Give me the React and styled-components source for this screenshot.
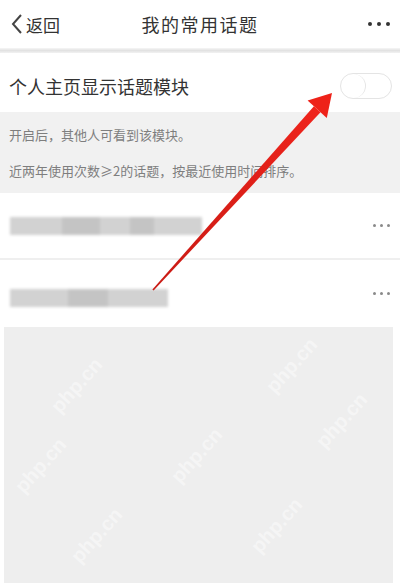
import React from "react";
import styled, { createGlobalStyle } from "styled-components";

const GlobalStyle = createGlobalStyle`
  html, body {
    margin: 0;
    padding: 0;
    background: #fff;
  }
  body {
    font-family: "Noto Sans CJK SC", "Noto Sans", sans-serif;
    color: #333;
  }
`;

const topics = [
  { id: 1, blocks: [52, 38, 30, 24, 48], shift: 0 },
  { id: 2, blocks: [58, 40, 60], shift: 4 },
];

// faint watermark stamps over the empty area
const marks = [
  { x: 40, y: 375 },
  { x: 255, y: 355 },
  { x: 160, y: 445 },
  { x: 240, y: 515 },
  { x: 305, y: 410 },
  { x: 4, y: 455 },
  { x: 60, y: 525 },
];

const Dots = ({ dark }) => (
  <DotRow dark={dark}>
    <span />
    <span />
    <span />
  </DotRow>
);

const Toggle = () => (
  <Switch>
    <Knob />
  </Switch>
);

const App = () => (
  <>
    <GlobalStyle />
    <Page>
      <Header>
        <Back>
          <svg width="14" height="22" viewBox="0 0 14 22">
            <path d="M11 2 L3 11 L11 20" fill="none" stroke="#444" strokeWidth="2" />
          </svg>
          返回
        </Back>
        <Title>我的常用话题</Title>
        <HeaderMore>
          <Dots dark />
        </HeaderMore>
      </Header>
      <Shade />

      <SettingRow>
        <SettingLabel>个人主页显示话题模块</SettingLabel>
        <Toggle />
      </SettingRow>

      <Notes>
        <Note>开启后，其他人可看到该模块。</Note>
        <Note>近两年使用次数≥2的话题，按最近使用时间排序。</Note>
      </Notes>

      {topics.map((t, i) => (
        <TopicRow key={t.id} last={i === topics.length - 1}>
          <Redacted shift={t.shift}>
            {t.blocks.map((w, j) => (
              <Block key={j} style={{ width: w }} tone={j % 2} />
            ))}
          </Redacted>
          <Dots />
        </TopicRow>
      ))}

      <Filler>
        {marks.map((m, i) => (
          <Mark key={i} style={{ left: m.x, top: m.y - 328 }}>
            php.cn
          </Mark>
        ))}
      </Filler>

      <Arrow width="400" height="587" viewBox="0 0 400 587">
        <defs>
          <linearGradient id="shaft" x1="0" y1="1" x2="1" y2="0">
            <stop offset="0" stopColor="#c81a14" />
            <stop offset="1" stopColor="#f0241c" />
          </linearGradient>
        </defs>
        <polygon
          points="152.4,289.5 153.6,290.5 320.5,112.3 313.9,106.3"
          fill="url(#shaft)"
        />
        <polygon points="332,93 307.6,100.6 326.8,118" fill="#ee2219" />
      </Arrow>
    </Page>
  </>
);

export default App;

const Page = styled.div`
  position: relative;
  width: 400px;
  height: 587px;
  display: flex;
  flex-direction: column;
  overflow: hidden;
  background: #fff;
`;

const Header = styled.div`
  height: 48px;
  display: flex;
  align-items: center;
  justify-content: space-between;
  padding: 0 10px 0 10px;
  box-sizing: border-box;
  position: relative;
`;

const Back = styled.div`
  display: flex;
  align-items: center;
  gap: 2px;
  font-size: 17px;
  color: #333;
  width: 80px;
`;

const Title = styled.div`
  font-size: 18px;
  letter-spacing: 1.5px;
  color: #333;
`;

const HeaderMore = styled.div`
  width: 80px;
  display: flex;
  justify-content: flex-end;
`;

const Shade = styled.div`
  height: 5px;
  background: linear-gradient(#f6f6f6, #e2e2e2 50%, #f2f2f2);
`;

const SettingRow = styled.div`
  height: 59px;
  display: flex;
  align-items: center;
  justify-content: space-between;
  padding: 6px 8px 0 9px;
  box-sizing: border-box;
`;

const SettingLabel = styled.div`
  font-size: 18px;
  color: #333;
`;

const Switch = styled.div`
  width: 52px;
  height: 26px;
  border: 1.5px solid #e4e4e4;
  border-radius: 14px;
  box-sizing: border-box;
  display: flex;
  align-items: center;
`;

const Knob = styled.div`
  width: 25px;
  height: 24px;
  border-radius: 50%;
  border-right: 1.5px solid #e6e6e6;
  box-sizing: border-box;
`;

const Notes = styled.div`
  height: 81px;
  background: #f1f1f1;
  display: flex;
  flex-direction: column;
  justify-content: space-around;
  padding: 4px 9px 4px 9px;
  box-sizing: border-box;
`;

const Note = styled.div`
  font-size: 13px;
  color: #7e7e7e;
`;

const TopicRow = styled.div`
  height: 67px;
  display: flex;
  align-items: center;
  justify-content: space-between;
  padding: 0 10px 0 10px;
  border-bottom: ${({ last }) => (last ? "none" : "2px solid #efefef")};
  box-sizing: border-box;
`;

const Redacted = styled.div`
  display: flex;
  height: 18px;
  margin-top: ${({ shift }) => shift * 2}px;
  filter: blur(1.5px);
`;

const Block = styled.div`
  height: 100%;
  background: ${({ tone }) => (tone ? "#c4c4c4" : "#d2d2d2")};
`;

const DotRow = styled.div`
  display: flex;
  gap: ${({ dark }) => (dark ? "5px" : "3.5px")};
  span {
    width: ${({ dark }) => (dark ? "4px" : "3.5px")};
    height: ${({ dark }) => (dark ? "4px" : "3.5px")};
    border-radius: 50%;
    background: ${({ dark }) => (dark ? "#333" : "#8a8a8a")};
  }
`;

const Filler = styled.div`
  flex: 1;
  position: relative;
  margin: 0 7px 4px 4px;
  background: #eeeeee;
  overflow: hidden;
`;

const Mark = styled.div`
  position: absolute;
  font-family: "Liberation Sans", sans-serif;
  font-size: 20px;
  font-weight: bold;
  color: rgba(255, 255, 255, 0.45);
  transform: rotate(-48deg);
  white-space: nowrap;
`;

const Arrow = styled.svg`
  position: absolute;
  left: 0;
  top: 0;
  pointer-events: none;
`;
